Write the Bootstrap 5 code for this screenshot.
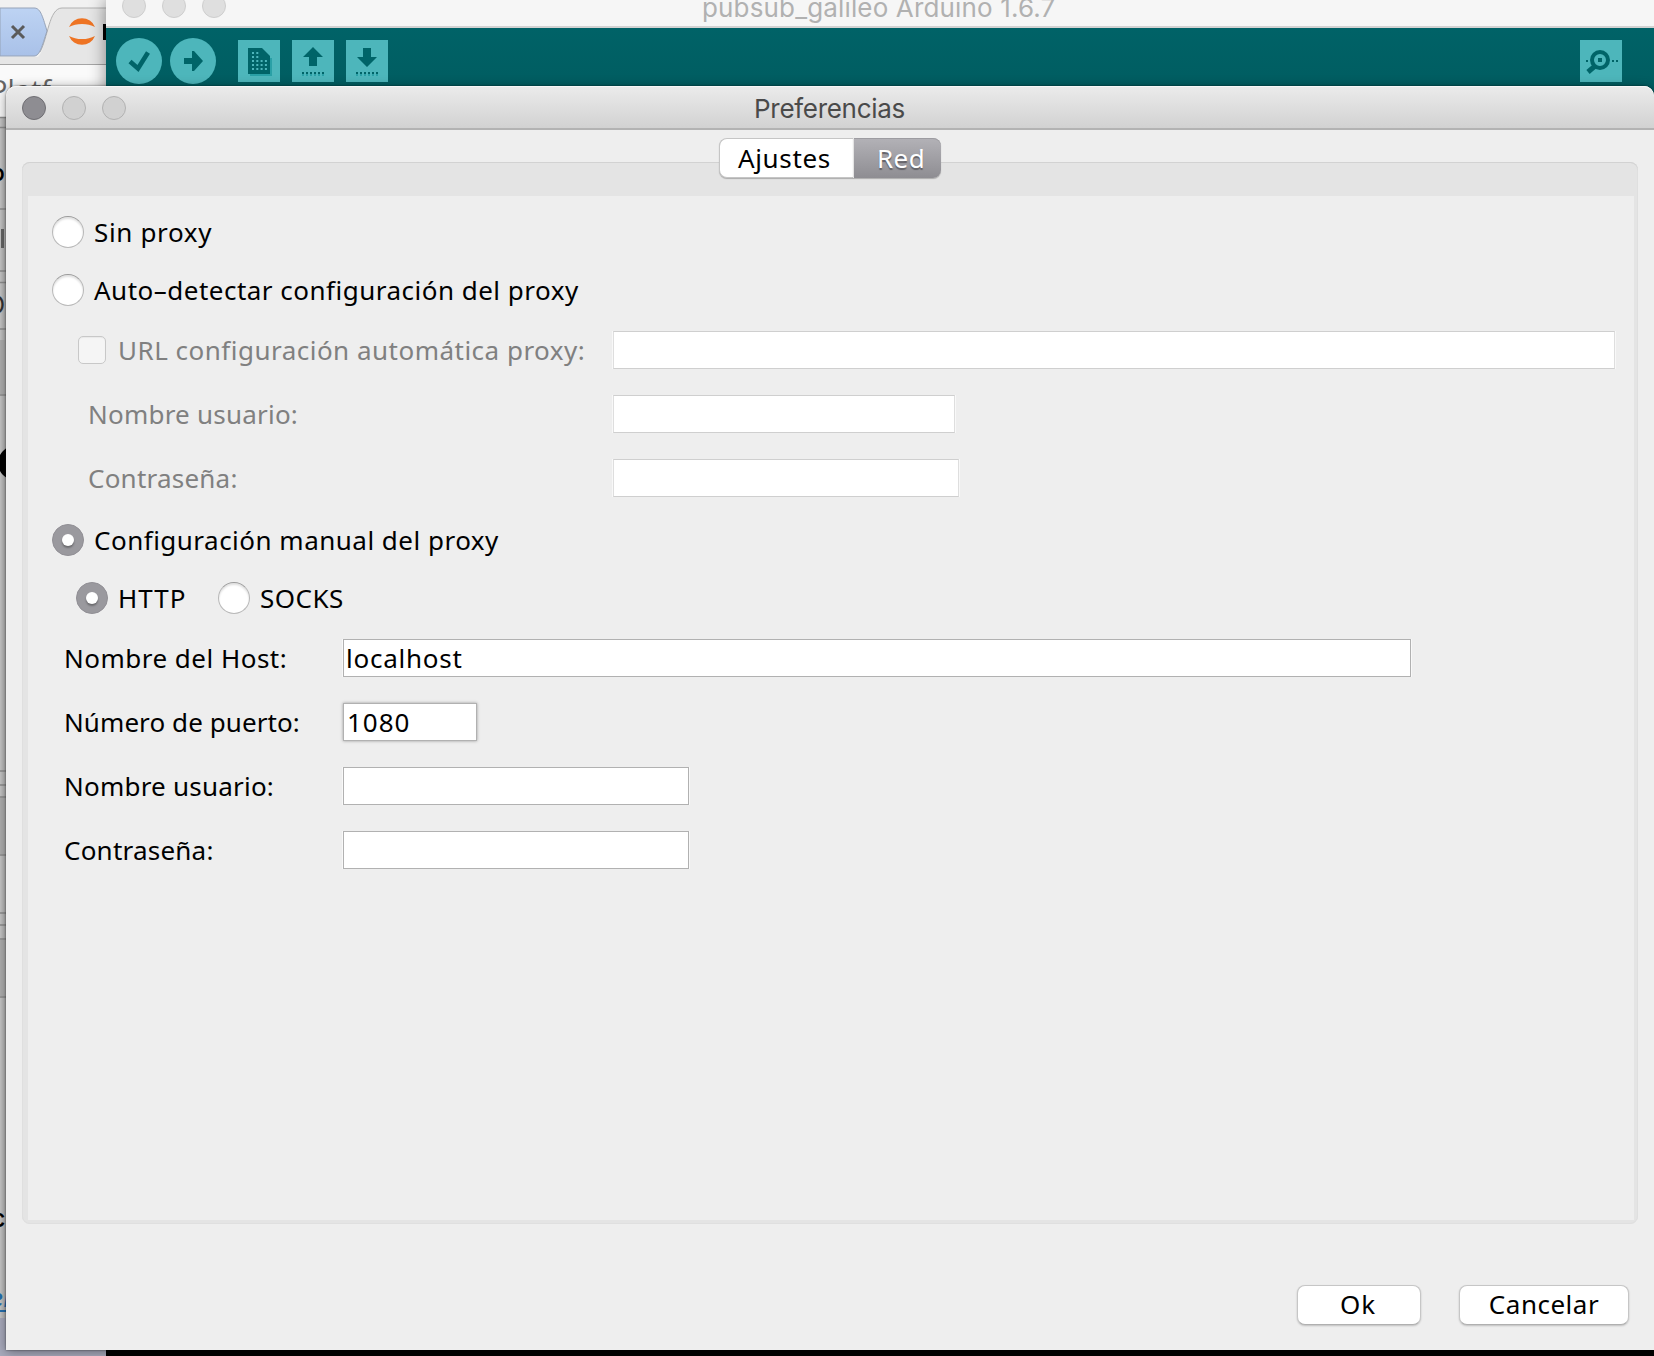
<!DOCTYPE html>
<html lang="es">
<head>
<meta charset="utf-8">
<title>Preferencias</title>
<link rel="stylesheet" href="https://cdn.jsdelivr.net/npm/bootstrap@5.3.0/dist/css/bootstrap.min.css">
<style>
html,body{width:1654px;height:1356px;overflow:hidden;background:#000}
body{font-family:"Noto Sans","Open Sans",sans-serif;font-size:26px;line-height:36px;color:#000}
.desk{width:1654px;height:1356px}
.browser{left:0;top:0}
.ide{left:106px;top:0;width:1548px;height:110px;background:linear-gradient(#00656a,#005d61 86px);box-shadow:0 0 16px rgba(0,0,0,.45)}
.ide-bar{height:28px;background:#f6f6f6;border-bottom:2px solid #d2d2d2}
.ide-title{left:596px;top:-8px;font-family:Inter,Roboto,sans-serif;white-space:nowrap;color:#b1b1b1;line-height:32px;letter-spacing:.15px}
.ide svg{display:block}
.lamps{left:16px;top:10px;gap:16px}
.lamps-ide{top:-6px}
.pref{left:6px;top:86px;width:1648px;height:1264px;background:#eee;border-radius:10px 10px 0 0;box-shadow:0 0 2px rgba(0,0,0,.6),0 2px 12px rgba(0,0,0,.4)}
.pref-bar{height:44px;border-radius:10px 10px 0 0;background:linear-gradient(#ebebeb,#d2d2d2);border-bottom:2px solid #b3b3b3;box-shadow:inset 0 1px #f7f7f7;color:#4a4a4a}
.pref-title{font-family:Inter,Roboto,sans-serif;letter-spacing:-.3px;padding-top:4px;margin-right:1px}
.lamp{width:24px;height:24px;border-radius:50%;background:#d1d1d1;border:1px solid #b2b2b2}
.lamp-on{background:#8e8d92;border-color:#6f6e73}
.lamp-dim{background:#dfdfdf;border-color:#cecece}
.panel{margin:32px 16px 0;height:1062px;background:#e4e4e4;border-radius:8px;box-shadow:inset 0 1px #d2d2d2,inset 0 0 0 1px #dfdfdf;padding:34px 4px 4px 6px}
.panel-in{height:1024px;background:#eee;padding-top:7px}
.seg{left:713px;top:52px;height:40px;width:222px}
.seg-a{width:134px;background:#fff;border:1px solid #c5c5c5;border-right:0;border-radius:8px 0 0 8px;box-shadow:0 1px 1px rgba(0,0,0,.25);line-height:38px;padding-left:18px;letter-spacing:.65px}
.seg-b{width:88px;background:linear-gradient(#b3b2b7,#8e8d92);color:#fff;border-left:1px solid #e4e4e4;border-radius:0 8px 8px 0;text-shadow:0 2px 1px #626166;box-shadow:0 1px 1px rgba(0,0,0,.25),inset 0 1px #9d9ca1;line-height:40px;padding-left:23px;letter-spacing:.4px}
.r58{height:58px}.r62{height:62px}.r64{height:64px}
.nudge{margin-top:1px}
.opt{width:32px;height:32px;border-radius:50%;flex:none;background:#fff;border:1px solid #b9b9b9;border-top-color:#9b9b9b;box-shadow:inset 0 2px 2px rgba(0,0,0,.12)}
.opt-on{background:#9a999e;border-color:#918f95;box-shadow:none;display:flex;align-items:center;justify-content:center}
.opt-on::after{content:"";width:12px;height:12px;border-radius:50%;background:#fff;box-shadow:0 2px 2px rgba(0,0,0,.3)}
.tick{width:28px;height:28px;border-radius:5px;flex:none;background:#f5f5f5;border:1px solid #c8c8c8;box-shadow:inset 0 1px 1px rgba(0,0,0,.05)}
.off{color:#808080}
.box{height:38px;background:#fff;border:1px solid #b1b1b1;box-shadow:1px 0 #f8f8f8,-1px 0 #f8f8f8;line-height:36px;flex:none;padding-left:2px;letter-spacing:.75px}
.box-off{border-color:#cfcfcf #dedede}
.box-port{box-shadow:0 0 3px rgba(0,0,0,.35);padding-left:3px;letter-spacing:1px}
.lab{white-space:nowrap;flex:none;letter-spacing:.49px}
.k7{letter-spacing:.65px}.k4{letter-spacing:.22px}.k3{letter-spacing:.08px}.k14{letter-spacing:1px}
.g10{margin-left:10px}.g12{margin-left:12px}
.i1{padding-left:24px}.i2{padding-left:50px}.i3{padding-left:48px}.i4{padding-left:60px}.i5{padding-left:36px}
.c2{width:525px}.c3{width:279px}
.w-http{width:100px}
.w-url{width:1002px;margin-right:19px}.w-user{width:342px}.w-pass{width:346px}.w-host{width:1068px}.w-port{width:134px}
.push{height:40px;background:#fff;border:1px solid #c6c6c6;border-bottom-color:#b0b0b0;border-radius:8px;line-height:37px;text-align:center;box-shadow:0 1px 2px rgba(0,0,0,.2);letter-spacing:.5px}
.w-ok{width:124px;padding-right:2px;letter-spacing:1px}.w-cancel{width:170px}
.foot{padding:61px 25px 0 0;gap:38px}
</style>
</head>
<body>
<div class="desk position-relative overflow-hidden">
<svg class="browser position-absolute" width="106" height="1356" viewBox="0 0 106 1356">
<defs><linearGradient id="tb" x2="0" y2="1"><stop offset="0" stop-color="#bdd3f3"/><stop offset="1" stop-color="#a9c1e8"/></linearGradient>
<linearGradient id="sh"><stop offset="0" stop-color="#c9c9c9"/><stop offset="1" stop-color="#a9a9a9"/></linearGradient></defs>
<rect width="106" height="1356" fill="#f1f1f1"/>
<path d="M38 57C47 50 48 8 62 8H106V64H0V57Z" fill="#e6e6e6"/><path d="M40 52C48 38 49 8 62 8H106" fill="none" stroke="#b0b0b0"/>
<path d="M0 8H34C40 8 42 14 47 31C42 46 40 56 34 56H0Z" fill="url(#tb)" stroke="#96a3b8"/>
<path d="M12 26L24 38M24 26L12 38" stroke="#5b5b5b" stroke-width="3"/>
<path d="M69 27A14 14 0 0 1 95 27A20 13 0 0 0 69 27ZM69 36A14 14 0 0 0 95 36A20 13 0 0 1 69 36Z" fill="#ee7424"/>
<rect x="103" y="24" width="3" height="16"/>
<path d="M0 64.5H106" stroke="#a5a5a5"/><rect y="65" width="106" height="55" fill="#fafafa"/>
<text x="-10" y="101" font-family="Open Sans" font-size="29" fill="#666">Platf</text>
<rect y="117" width="8" height="1239" fill="url(#sh)"/>
<path d="M0 117.5H6M0 127.5H6M0 209H6M0 271H6M0 282.5H6M0 329H6M0 395H6M0 771H6M0 785H6M0 797H6M0 855H6M0 913H6M0 925H6M0 939H6M0 997H6" stroke="#8f8f8f" stroke-width="1.5"/>
<rect y="340" width="6" height="54" fill="#b0b0b0"/><rect y="798" width="6" height="56" fill="#b0b0b0"/><rect y="940" width="6" height="56" fill="#b0b0b0"/>
<text x="-10" y="181" font-family="Inter" font-size="24" font-weight="500">b</text>
<rect x="1" y="229" width="3" height="19" fill="#666"/>
<text x="-14" y="314" font-family="Inter" font-size="25" fill="#333">O</text>
<circle cx="15" cy="463" r="17"/>
<text x="-9" y="1227" font-family="Inter" font-size="25" font-weight="500">c</text>
<text x="-11" y="1307" font-family="Inter" font-size="25" font-style="italic" font-weight="500" fill="#2570b0">er</text>
<rect y="1310" width="6" height="2" fill="#2570b0"/><rect y="1318" width="106" height="38" fill="#a9abbd"/>
</svg>
<div class="ide position-absolute">
<div class="ide-bar position-relative">
<div class="lamps lamps-ide d-flex position-absolute"><i class="lamp lamp-dim"></i><i class="lamp lamp-dim"></i><i class="lamp lamp-dim"></i></div>
<span class="ide-title position-absolute">pubsub_galileo Arduino 1.6.7</span>
</div>
<svg width="1548" height="58" viewBox="106 28 1548 58" fill="#006468">
<g fill="#4db6bb"><circle cx="139" cy="61" r="23"/><circle cx="193" cy="61" r="23"/><path d="M238 40h42v42h-42zM292 40h42v42h-42zM346 40h42v42h-42zM1580 40h42v42h-42z"/></g>
<path d="M130 61.500L138 68.500L148 52.500" fill="none" stroke="#006468" stroke-width="4.600"/>
<path d="M184 58h8v-7h2l9 10-9 10h-2v-7h-8z"/>
<path d="M250 74h20V58h2v18h-22z" fill="#2aa0a6"/>
<path d="M248 48h14l8 8v18h-22z"/>
<path d="M252 53h7M252 57h7M252 61h16M252 65h16M252 69h16" stroke="#4db6bb" stroke-width="2" stroke-dasharray="2 2.300" fill="none"/>
<path d="M262 50l6 6h-6z" fill="#006468"/>
<path d="M313 47l10 10h-6v9h-8v-9h-6zM371 48v9h6l-10 10-10-10h6v-9z"/>
<path d="M302 73h22M356 73h22" stroke="#006468" stroke-width="2" stroke-dasharray="2 2"/><path d="M302 75h22M356 75h22" stroke="#2aa0a6" stroke-width="2" stroke-dasharray="2 2"/>
<circle cx="1600" cy="60" r="8" fill="none" stroke="#006468" stroke-width="4"/><path d="M1598 58h4v4h-4zM1586 60h2v2h-2zM1612 60h2v2h-2zM1616 60h2v2h-2z"/><path d="M1595 66L1588 72" stroke="#006468" stroke-width="5"/>
</svg>
</div>
<div class="pref position-absolute">
<div class="pref-bar position-relative d-flex align-items-center justify-content-center">
<div class="lamps d-flex position-absolute"><i class="lamp lamp-on"></i><i class="lamp"></i><i class="lamp"></i></div>
<span class="pref-title">Preferencias</span>
</div>
<div class="seg position-absolute d-flex"><div class="seg-a">Ajustes</div><div class="seg-b">Red</div></div>
<div class="panel"><div class="panel-in">
<div class="r58 i1 d-flex align-items-center"><i class="opt"></i><span class="lab k7 g10">Sin proxy</span></div>
<div class="r58 i1 d-flex align-items-center"><i class="opt"></i><span class="lab g10">Auto–detectar configuración del proxy</span></div>
<div class="r62 i2 d-flex align-items-center off"><i class="tick"></i><span class="lab g12 k-url">URL configuración automática proxy:</span><div class="box box-off w-url ms-auto"></div></div>
<div class="r64 i4 nudge d-flex align-items-center off"><span class="lab k4 c2">Nombre usuario:</span><div class="box box-off w-user"></div></div>
<div class="r64 i4 d-flex align-items-center off"><span class="lab k4 c2">Contraseña:</span><div class="box box-off w-pass"></div></div>
<div class="r58 i1 nudge d-flex align-items-center"><i class="opt opt-on"></i><span class="lab g10">Configuración manual del proxy</span></div>
<div class="r58 i3 d-flex align-items-center"><i class="opt opt-on"></i><span class="lab k14 g10 w-http">HTTP</span><i class="opt"></i><span class="lab g10">SOCKS</span></div>
<div class="r62 i5 d-flex align-items-center"><span class="lab c3">Nombre del Host:</span><div class="box w-host">localhost</div></div>
<div class="r64 i5 nudge d-flex align-items-center"><span class="lab k3 c3">Número de puerto:</span><div class="box box-port w-port">1080</div></div>
<div class="r64 i5 d-flex align-items-center"><span class="lab k4 c3">Nombre usuario:</span><div class="box w-pass"></div></div>
<div class="r64 i5 d-flex align-items-center"><span class="lab k4 c3">Contraseña:</span><div class="box w-pass"></div></div>
</div></div>
<div class="foot d-flex justify-content-end"><div class="push w-ok">Ok</div><div class="push w-cancel">Cancelar</div></div>
</div>
</div>
<script src="https://cdn.jsdelivr.net/npm/bootstrap@5.3.0/dist/js/bootstrap.bundle.min.js"></script>
</body>
</html>
